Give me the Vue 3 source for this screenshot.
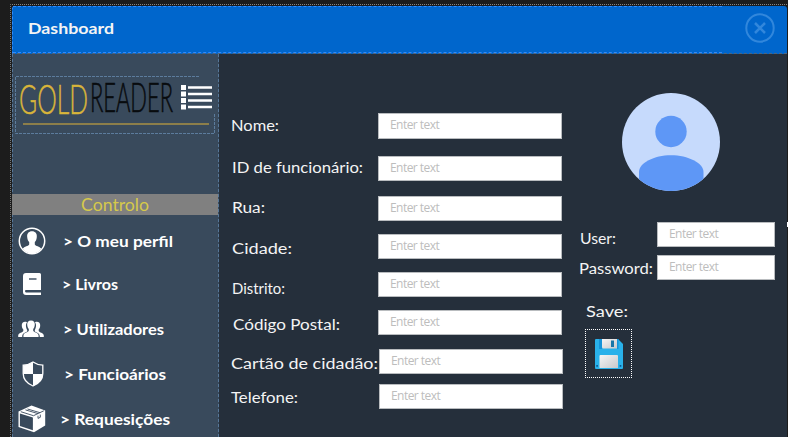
<script setup>
import { h } from 'vue'

// Single line of text set to a fixed measure; the baseline sits 16px below the top.
const FitText = (props) =>
  h('svg', { class: 'fit', width: props.width, height: 20 }, [
    h('text', { x: 0, y: 16, textLength: props.width, lengthAdjust: 'spacingAndGlyphs', fill: 'currentColor' }, props.text),
  ])
FitText.props = ['text', 'width']

const menu = [
  { icon: 'profile', text: '> O meu perfil', width: 110, height: 44, indent: 64 },
  { icon: 'book', text: '> Livros', width: 56, height: 42, indent: 63 },
  { icon: 'users', text: '> Utilizadores', width: 101, height: 48, indent: 64 },
  { icon: 'shield', text: '> Funcioários', width: 102, height: 42, indent: 65 },
  { icon: 'box', text: '> Requesições', width: 110, height: 48, indent: 61 },
]

const fields = [
  { text: 'Nome:', width: 48, gap: 0, drop: 2, indent: 12, shift: 0, tall: true },
  { text: 'ID de funcionário:', width: 131, gap: 17, drop: 1, indent: 13, shift: 0 },
  { text: 'Rua:', width: 33, gap: 15, drop: 1, indent: 13, shift: 0 },
  { text: 'Cidade:', width: 60, gap: 13, drop: 4, indent: 13, shift: 0 },
  { text: 'Distrito:', width: 53, gap: 13, drop: 6, indent: 13, shift: 0 },
  { text: 'Código Postal:', width: 107, gap: 13, drop: 4, indent: 14, shift: 0 },
  { text: 'Cartão de cidadão:', width: 147, gap: 14, drop: 4, indent: 12, shift: 1 },
  { text: 'Telefone:', width: 67, gap: 10, drop: 3, indent: 12, shift: 1 },
]
</script>

<template>
  <div class="screen">
    <div class="window">
      <header class="bar">
        <FitText class="title" text="Dashboard" :width="86" />
        <svg class="close" width="30" height="30" viewBox="0 0 30 30">
          <circle cx="15" cy="15" r="13.7" />
          <path d="M10 10l10 10M20 10L10 20" />
        </svg>
        <i class="bar-dash"></i>
      </header>
      <div class="body">
        <aside class="sidebar">
          <div class="brand">
            <svg width="200" height="58" viewBox="0 0 200 58">
              <path class="guide" d="M184 .5H.5V57.500H199.500V38" />
              <text class="gold" x="4" y="37.500" textLength="69" lengthAdjust="spacingAndGlyphs">GOLD</text>
              <text class="reader" x="75" y="35.500" textLength="83" lengthAdjust="spacingAndGlyphs">READER</text>
              <path class="rule" d="M8 48H194" />
              <g class="list">
                <path d="M166 9h5v5h-5zM166 15.500h5v5h-5zM166 22h5v5h-5zM166 28.500h5v5h-5z" />
                <path d="M173 10.200h24v2.600h-24zM173 16.700h24v2.600h-24zM173 23.200h24v2.600h-24zM173 29.700h24v2.600h-24z" />
              </g>
            </svg>
          </div>
          <div class="section"><FitText text="Controlo" :width="68" /></div>
          <nav>
            <a v-for="m in menu" :key="m.icon" class="item" :style="{ height: m.height + 'px' }">
              <span class="ico" :style="{ width: m.indent - 19 + 'px' }">
                <svg v-if="m.icon === 'profile'" width="28" height="28" viewBox="0 0 28 28">
                  <circle cx="14" cy="14" r="12.700" fill="none" stroke="#fff" stroke-width="1.500" />
                  <path fill="#fff" d="M14 4.300c3.400 0 5.100 2.300 4.800 5.600-.2 2.500-1 4.200-2 5.200v2.400c.5 1.600 5 1.900 6.500 4.300C21 25 18 26.500 14 26.500S7 25 4.700 21.800c1.500-2.400 6-2.700 6.500-4.300v-2.400c-1-1-1.800-2.700-2-5.200-.3-3.300 1.400-5.600 4.800-5.600z" />
                </svg>
                <svg v-else-if="m.icon === 'book'" class="book" width="19" height="22" viewBox="0 0 19 22">
                  <path fill="#fff" d="M3 0h13.500Q18 0 18 1.500V17H3Q2 17 2 18t1 1.500H18V22H3Q0 22 0 19V3Q0 0 3 0z" />
                  <path d="M6 6h7.500" stroke="#394a5c" stroke-width="1.400" />
                </svg>
                <svg v-else-if="m.icon === 'users'" width="27" height="18" viewBox="0 0 27 18" fill="#fff">
                  <path d="M13 .5c2.700 0 4 1.700 3.800 4.300-.1 2-.8 3.300-1.600 4.200v1.700c.5 1.700 5 1.800 5.300 4.300l.1 2H5.400l.1-2c.3-2.500 4.800-2.600 5.300-4.300V9c-.8-.9-1.500-2.200-1.600-4.200C9 2.200 10.300.5 13 .500z" />
                  <path d="M9 2.200C6.200 1 3.500 2.500 3.800 5.800c.1 1.700.7 3 1.500 3.700v1.600C4.700 12.600.5 13 .2 15.500v1.500h4c0-3.500 2-4.200 5-5.500V10C8 8 7.200 4.500 9 2.200z" />
                  <path d="M17 2.200c2.800-1.200 5.500.3 5.200 3.600-.1 1.700-.7 3-1.500 3.700v1.600c.6 1.500 4.800 1.900 5.100 4.400v1.500h-4c0-3.500-2-4.200-5-5.500V10c1.200-2 2-5.500.2-7.800z" />
                </svg>
                <svg v-else-if="m.icon === 'shield'" class="shield" width="22" height="26" viewBox="0 0 22 26">
                  <path fill="#394a5c" stroke="#fff" stroke-width="1.300" d="M11 1C8 3 5 4.200 1.200 4.200v8.300C1.200 18 5 22.500 11 25c6-2.500 9.800-7 9.800-12.500V4.200C17 4.200 14 3 11 1z" />
                  <path fill="#fff" d="M11 1v12H1.200V4.200C5 4.200 8 3 11 1zM11 13h9.800C20.600 18.500 17 22.500 11 25z" />
                </svg>
                <svg v-else width="28" height="28" viewBox="0 0 28 28">
                  <path fill="#fff" d="M13.500.5L27.200 5.500V20.500L16 27.200.5 22V6.500z" />
                  <path fill="#394a5c" d="M1.900 8.400l13 4v12.900L1.900 21z" />
                  <path fill="none" stroke="#394a5c" stroke-width=".9" d="M2.800 6.700l12.700 4L25.800 5.800M7.500 4.900l12.500 3.700M9.500 4l12.500 3.700" />
                  <path fill="none" stroke="#394a5c" stroke-width=".9" d="M20 10.700v2.700l2.300-1.100V9.600" />
                </svg>
              </span>
              <FitText :text="m.text" :width="m.width" />
            </a>
          </nav>
        </aside>
        <main class="content">
          <form class="details">
            <label v-for="f in fields" :key="f.text" class="row" :style="{ marginTop: f.gap + 'px' }">
              <span class="name" :style="{ paddingTop: f.drop + 'px', paddingLeft: f.indent + 'px', width: 159 + f.shift + 'px' }">
                <FitText :text="f.text" :width="f.width" />
              </span>
              <input :class="{ tall: f.tall }" placeholder="Enter text" />
            </label>
          </form>
          <section class="account">
            <svg class="avatar" width="98" height="98" viewBox="0 0 98 98">
              <defs><clipPath id="disc"><circle cx="49" cy="49" r="49" /></clipPath></defs>
              <g clip-path="url(#disc)">
                <rect width="98" height="98" fill="#c6dafc" />
                <circle cx="49" cy="38.500" r="15.700" fill="#5e97f6" />
                <path fill="#5e97f6" d="M17 98V79C17 70 32 62.300 49 62.300S81.500 70 81.500 79V98z" />
              </g>
            </svg>
            <label class="row user">
              <span class="name"><FitText text="User:" :width="36" /></span>
              <input placeholder="Enter text" />
            </label>
            <label class="row pass">
              <span class="name"><FitText text="Password:" :width="74" /></span>
              <input placeholder="Enter text" />
            </label>
            <FitText class="save-label" text="Save:" :width="42" />
            <button class="save" type="button" aria-label="Save">
              <svg width="28" height="30" viewBox="0 0 28 30">
                <defs>
                  <linearGradient id="metal" x1="0" y1="0" x2="1" y2="1"><stop stop-color="#f5f5f5" /><stop offset="1" stop-color="#c9c9cb" /></linearGradient>
                </defs>
                <path fill="#29b1ea" d="M1 0H23L28 5V29Q28 30 27 30H1Q0 30 0 29V1Q0 0 1 0z" />
                <path fill="#1593d8" d="M4 0h3v10H4zM22 0h1.500v10H22z" />
                <path fill="url(#metal)" d="M7 0h15v9.500H8.500Q7 9.500 7 8z" />
                <path fill="#1976a8" d="M16 1.500h3v6.500h-3z" />
                <path fill="url(#metal)" d="M5.500 16h16.500q1 0 1 1V29H4.500V17q0-1 1-1z" />
                <path fill="#0b5793" d="M1.300 26h1.600v1.700H1.300zM24.700 26h1.600v1.700h-1.600z" />
              </svg>
            </button>
          </section>
        </main>
      </div>
    </div>
    <i class="handle"></i>
  </div>
</template>

<style>
body { background: #1c1c1c; overflow: hidden; }
</style>

<style scoped>
* { box-sizing: border-box; }
.screen {
  position: relative; width: 788px; height: 437px; padding: 4px 1px 0 10px; overflow: hidden;
  background: #1c1c1c; font-family: "Century Gothic", Lato, sans-serif; font-size: 15.5px; color: #f4f4f4;
}
.window { height: 433px; border-top: 1px dotted #858585; border-left: 1px dotted #777; padding: 1px 0 0 1px; display: flex; flex-direction: column; }
.fit { display: block; flex: none; overflow: visible; }
.bar {
  position: relative; height: 48px; flex: none; display: flex; align-items: center; justify-content: space-between;
  padding: 0 12px 3px 16px; background: #06c; border-left: 1px dashed #2e8bff; border-bottom: 1px dashed #50657c;
  border-radius: 3px 3px 0 0;
}
.title { font-weight: 700; font-size: 16px; margin-left: -1px; }
.bar-dash { position: absolute; left: 0; top: 0; width: 709px; height: 47px; border: dashed #2e8bff; border-width: 1px 0; }
.close { fill: none; stroke: #3187dc; stroke-width: 2; }
.close path { stroke-width: 2.5; }
.body { flex: 1; display: flex; min-height: 0; }
.sidebar { width: 207px; flex: none; background: #394a5c; border: dashed #567799; border-width: 0 1px; }
.brand { padding: 22px 0 0 2px; height: 140px; }
.brand svg { display: block; overflow: visible; }
.guide { fill: none; stroke: #5c7c9d; stroke-dasharray: 3 1; }
.gold, .reader { font-family: Lato, sans-serif; font-weight: 300; }
.gold { fill: #d9b53a; stroke: #d9b53a; stroke-width: .5; font-size: 42px; }
.reader { fill: #080b0e; stroke: #080b0e; stroke-width: .6; font-size: 41px; }
.rule { stroke: #a99044; stroke-width: 1.6; }
.list { fill: #fff; }
.section { height: 21px; margin-left: -1px; padding-left: 69px; background: #808080; color: #d6c94b; font-size: 17px; display: flex; align-items: center; }
.section .fit { margin-top: 1px; }
nav { padding-top: 4px; }
.item { display: flex; align-items: center; padding-left: 5px; font-weight: 700; font-size: 16px; color: #fff; }
.ico { display: flex; flex: none; }
.book { margin-left: 5px; }
.shield { margin-left: 4px; }
.content { flex: 1; display: flex; background: #252f3b; }
.details { width: 356px; padding-top: 59px; }
.row { display: flex; align-items: flex-start; }
.name { flex: none; height: 25px; }
input {
  width: 184px; height: 25px; padding: 0 0 2px 11px; border: 1px solid #b9bcbf; background: #fff; outline: 0;
  font: 12px/20px "Open Sans", sans-serif; letter-spacing: -.55px;
}
input.tall { height: 26px; padding-bottom: 3px; }
input::placeholder { color: #bdbdbd; opacity: 1; }
.account { width: 206px; padding-top: 39px; display: flex; flex-direction: column; align-items: flex-start; }
.avatar { display: block; flex: none; margin-left: 47px; }
.account input { width: 118px; }
.account .name { width: 82px; }
.user { margin-top: 31px; }
.user .name { padding: 6px 0 0 5px; }
.pass { margin-top: 8px; }
.pass .name { padding: 3px 0 0 4px; }
.save-label { margin: 21px 0 0 11px; }
.save { margin: 8px 0 0 10px; width: 47px; height: 49px; padding: 0; border: 1px dotted #fff; background: none; display: flex; align-items: center; justify-content: center; }
.handle { position: absolute; right: 0; top: 222px; width: 1px; height: 5px; background: #fff; }
</style>
